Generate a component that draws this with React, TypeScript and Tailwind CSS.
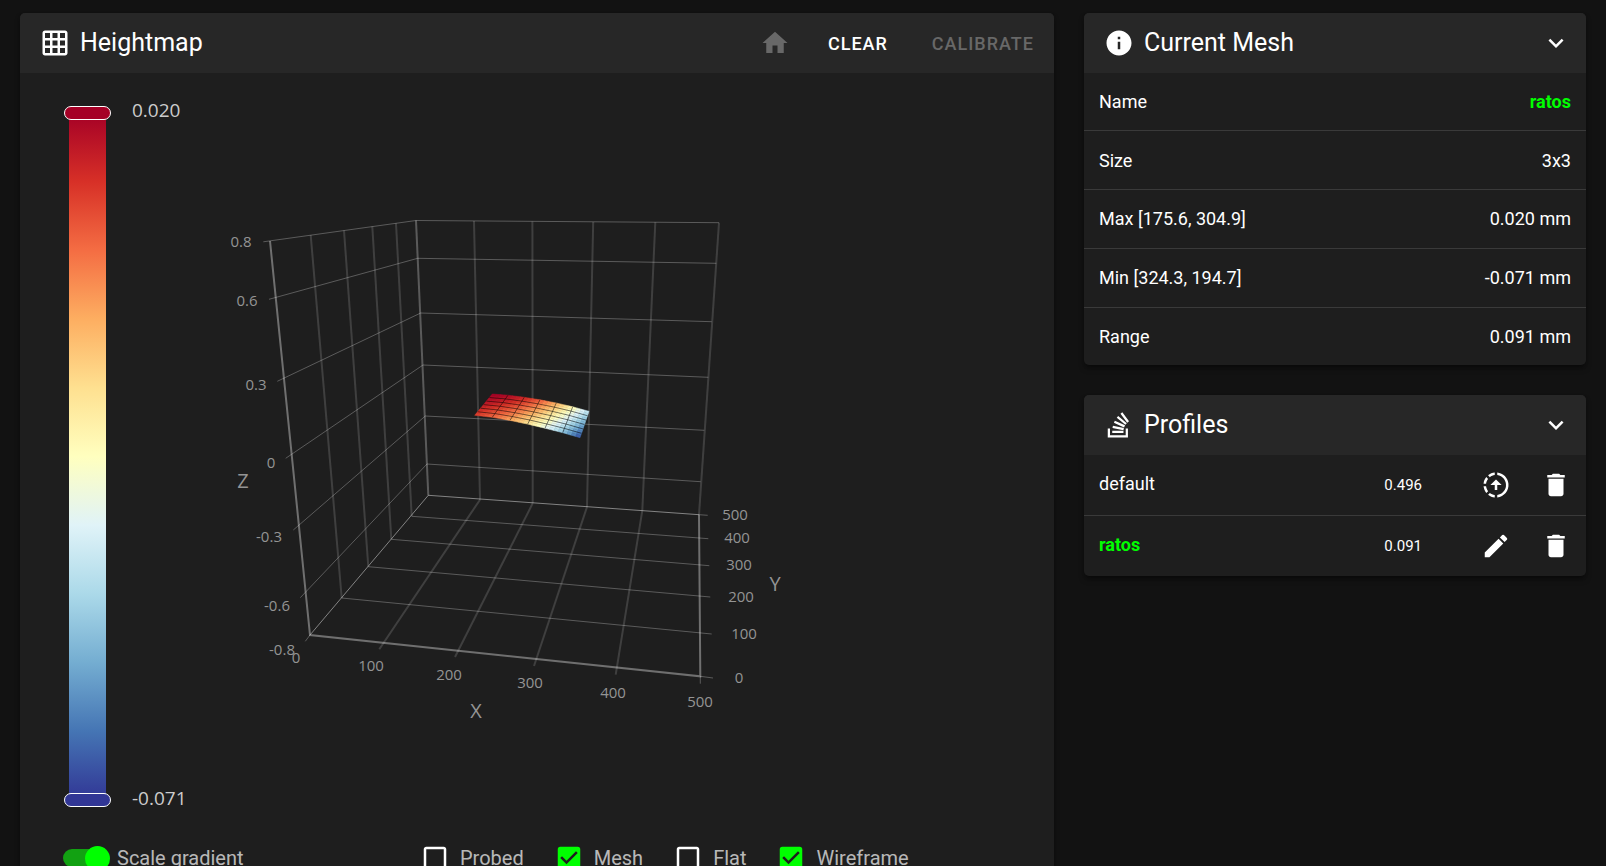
import { useState } from 'react'
import type { ReactNode } from 'react'
import {
  MdCheckBox,
  MdCheckBoxOutlineBlank,
  MdDelete,
  MdEdit,
  MdGridOn,
  MdHome,
  MdInfo,
  MdKeyboardArrowDown,
} from 'react-icons/md'

type Point = [number, number]
type Line = [number, number, number, number]

const MESH_ROWS = [
  { label: 'Name', value: 'ratos', active: true },
  { label: 'Size', value: '3x3' },
  { label: 'Max [175.6, 304.9]', value: '0.020 mm' },
  { label: 'Min [324.3, 194.7]', value: '-0.071 mm' },
  { label: 'Range', value: '0.091 mm' },
]

const PROFILES = [
  { name: 'default', range: '0.496', active: false },
  { name: 'ratos', range: '0.091', active: true },
]

const SCALE = [
  '#313695', '#4575b4', '#74add1', '#abd9e9', '#e0f3f8', '#ffffbf',
  '#fee090', '#fdae61', '#f46d43', '#d73027', '#a50026',
]

// left wall, then back wall
const WALL_VERTICALS: Line[] = [
  [310.7, 235, 341.7, 598],
  [344, 230.5, 368.3, 566.7],
  [372.3, 226.5, 391.3, 539.3],
  [396, 223.3, 411.7, 516.3],
  [474, 221, 480, 499.7],
  [532.4, 221.5, 532.7, 503.3],
  [593.2, 222, 587, 507],
  [655.3, 222.3, 642.3, 510.7],
  [719, 222.7, 699, 514.7],
]

// tick end on the z axis, back corner, right end
const Z_RINGS: [Point, Point, Point][] = [
  [[263.3, 241.8], [416, 220.5], [719, 222.7]],
  [[269, 299.3], [417.7, 258.3], [716.3, 263.3]],
  [[277.3, 381.3], [420.7, 313], [711.7, 321.7]],
  [[285.7, 458.3], [423, 365], [708.3, 377.3]],
  [[293.3, 530], [425.3, 416], [704.3, 430.3]],
  [[300.3, 597.7], [427, 464], [700.7, 481.7]],
]

const FLOOR_X: Line[] = [
  [480, 499.7, 379.3, 649.3],
  [532.7, 503.3, 455, 657],
  [587, 507, 534, 666],
  [642.3, 510.7, 615.7, 674.7],
]

const FLOOR_Y: Line[] = [
  [341.7, 598, 711.7, 634],
  [368.3, 566.7, 710.3, 597],
  [391.3, 539.3, 709.3, 565.7],
  [411.7, 516.3, 708.3, 538.7],
]

const TICKS: Line[] = [
  [310, 635, 305.3, 641.3],
  [700.3, 676.3, 700.3, 683.7],
  [699, 514.7, 707.7, 515.3],
  [700.3, 676.3, 713, 678],
]

const TICK_LABELS: [string, number, number][] = [
  ['0.8', 241, 242],
  ['0.6', 247, 301],
  ['0.3', 256, 385],
  ['0', 271, 463],
  ['-0.3', 269, 537],
  ['-0.6', 277, 606],
  ['-0.8', 282, 650],
  ['0', 296, 658],
  ['100', 371, 666],
  ['200', 449, 675],
  ['300', 530, 683],
  ['400', 613, 693],
  ['500', 700, 702],
  ['500', 735, 515],
  ['400', 737, 538],
  ['300', 739, 565],
  ['200', 741, 597],
  ['100', 744, 634],
  ['0', 739, 678],
]

const AXIS_NAMES: [string, number, number][] = [
  ['Z', 243, 481],
  ['X', 476, 711],
  ['Y', 775, 584],
]

// back and front edge of the probed surface
const BACK_EDGE: Point[] = [
  [492.3, 394], [508, 395.2], [524.3, 397.3], [540, 399.8], [556.3, 403], [572.7, 406.8], [589, 411.3],
]
const FRONT_EDGE: Point[] = [
  [474.7, 415.3], [492.3, 417.3], [510, 420.4], [527.7, 424.1], [545, 428.2], [562.7, 432.7], [580, 437.7],
]

function alongEdge(edge: Point[], u: number): Point {
  const at = u * (edge.length - 1)
  const i = Math.min(Math.floor(at), edge.length - 2)
  const f = at - i
  return [
    edge[i][0] + (edge[i + 1][0] - edge[i][0]) * f,
    edge[i][1] + (edge[i + 1][1] - edge[i][1]) * f,
  ]
}

function surface(u: number, v: number): Point {
  const a = alongEdge(BACK_EDGE, u)
  const b = alongEdge(FRONT_EDGE, u)
  return [a[0] + (b[0] - a[0]) * v, a[1] + (b[1] - a[1]) * v]
}

function level(u: number, v: number) {
  const back = 1 - 0.67 * u * u
  const front = 0.88 - 0.35 * u - 0.5 * u * u
  return back + (front - back) * v
}

function scaleColor(t: number) {
  const at = Math.max(0, Math.min(1, t)) * (SCALE.length - 1)
  const i = Math.min(Math.floor(at), SCALE.length - 2)
  const channel = (hex: string, c: number) => parseInt(hex.slice(1 + c * 2, 3 + c * 2), 16)
  const rgb = [0, 1, 2].map(c => {
    const from = channel(SCALE[i], c)
    return Math.round(from + (channel(SCALE[i + 1], c) - from) * (at - i))
  })
  return `rgb(${rgb.join(',')})`
}

const toPoints = (points: Point[]) => points.map(p => p.join(',')).join(' ')

function MeshSurface() {
  const cols = 24
  const rows = 12
  const cells = []
  for (let r = 0; r < rows; r++) {
    for (let c = 0; c < cols; c++) {
      const u0 = c / cols
      const u1 = (c + 1) / cols
      const v0 = r / rows
      const v1 = (r + 1) / rows
      const color = scaleColor(level((u0 + u1) / 2, (v0 + v1) / 2))
      cells.push(
        <polygon
          key={`${r}-${c}`}
          points={toPoints([surface(u0, v0), surface(u1, v0), surface(u1, v1), surface(u0, v1)])}
          fill={color}
          stroke={color}
          strokeWidth={0.5}
        />
      )
    }
  }
  const steps = [0, 1, 2, 3, 4, 5, 6]
  return (
    <g>
      {cells}
      <g fill="none" stroke="#000" strokeOpacity={0.5} strokeWidth={1}>
        {steps.slice(1, 6).map(n => (
          <polyline key={`u${n}`} points={toPoints([surface(n / 6, 0), surface(n / 6, 1)])} />
        ))}
        {steps.slice(1, 6).map(n => (
          <polyline key={`v${n}`} points={toPoints(steps.map(s => surface(s / 6, n / 6)))} />
        ))}
      </g>
    </g>
  )
}

function Lines({ lines }: { lines: Line[] }) {
  return (
    <>
      {lines.map(([x1, y1, x2, y2], i) => (
        <line key={i} x1={x1} y1={y1} x2={x2} y2={y2} />
      ))}
    </>
  )
}

function HeightmapChart() {
  return (
    <svg
      viewBox="187 106 847 701"
      className="block h-auto w-full font-['Open_Sans','Noto_Sans',sans-serif]"
      role="img"
      aria-label="Heightmap">
      <g stroke="#fff" strokeOpacity={0.15} strokeWidth={2} fill="none">
        <Lines lines={WALL_VERTICALS} />
        <Lines lines={FLOOR_X} />
      </g>
      <g stroke="#fff" strokeOpacity={0.27} strokeWidth={1} fill="none">
        {Z_RINGS.map((ring, i) => (
          <polyline key={i} points={toPoints(ring)} />
        ))}
        <Lines lines={FLOOR_Y} />
        <Lines lines={TICKS} />
      </g>
      <g stroke="#fff" fill="none">
        <polyline points="416,220.5 428.3,495.3" strokeOpacity={0.27} strokeWidth={2} />
        <polyline points="310,635 428.3,495.3 699,514.7" strokeOpacity={0.45} strokeWidth={1} />
        <polyline points="270,241 310,635 700.3,676.3 699,514.7" strokeOpacity={0.36} strokeWidth={2} />
      </g>

      <MeshSurface />

      <g fill="#949494" textAnchor="middle">
        {TICK_LABELS.map(([text, x, y], i) => (
          <text key={i} x={x} y={y + 5} className="text-[15px]">{text}</text>
        ))}
        {AXIS_NAMES.map(([text, x, y]) => (
          <text key={text} x={x} y={y + 7} className="text-[20px]">{text}</text>
        ))}
      </g>
    </svg>
  )
}

function ScaleHandle({ label, value, onChange, thumb }: {
  label: string
  value: number
  onChange: (value: number) => void
  thumb: string
}) {
  return (
    <input
      type="range"
      aria-label={label}
      min={-71}
      max={20}
      value={value}
      onChange={e => onChange(Number(e.target.value))}
      className={`pointer-events-none absolute inset-0 m-0 h-full w-full appearance-none bg-transparent [direction:rtl] [writing-mode:vertical-lr] [&::-webkit-slider-thumb]:pointer-events-auto [&::-webkit-slider-thumb]:h-[14px] [&::-webkit-slider-thumb]:w-[47px] [&::-webkit-slider-thumb]:appearance-none [&::-webkit-slider-thumb]:rounded-full [&::-webkit-slider-thumb]:border [&::-webkit-slider-thumb]:border-white ${thumb}`}
    />
  )
}

function ColorScale() {
  const [max, setMax] = useState(20)
  const [min, setMin] = useState(-71)
  return (
    <div className="flex gap-[21px] font-['Open_Sans','Noto_Sans',sans-serif] text-[19px] leading-[9px] text-[#cccccc]">
      <div className="relative h-[701px] w-[47px]">
        <div className="mx-auto h-full w-[37px] py-[7px]">
          <div className="h-full bg-[linear-gradient(to_top,#313695,#4575b4,#74add1,#abd9e9,#e0f3f8,#ffffbf,#fee090,#fdae61,#f46d43,#d73027,#a50026)]" />
        </div>
        <ScaleHandle label="Scale maximum" value={max} onChange={setMax} thumb="[&::-webkit-slider-thumb]:bg-[#a50026]" />
        <ScaleHandle label="Scale minimum" value={min} onChange={setMin} thumb="[&::-webkit-slider-thumb]:bg-[#313695]" />
      </div>
      <div className="flex w-[55px] flex-col justify-between pb-1">
        <span>{(max / 1000).toFixed(3)}</span>
        <span>{(min / 1000).toFixed(3)}</span>
      </div>
    </div>
  )
}

function Toggle({ label, initial }: { label: string; initial: boolean }) {
  const [checked, setChecked] = useState(initial)
  const Icon = checked ? MdCheckBox : MdCheckBoxOutlineBlank
  return (
    <label className="flex cursor-pointer items-center gap-[10px]">
      <span className="relative">
        <input
          type="checkbox"
          checked={checked}
          onChange={e => setChecked(e.target.checked)}
          className="absolute inset-0 h-full w-full cursor-pointer opacity-0"
        />
        <Icon size={30} className={checked ? 'text-[#00ff00]' : 'text-white'} />
      </span>
      {label}
    </label>
  )
}

function Card({ icon, title, actions, children }: {
  icon: ReactNode
  title: string
  actions: ReactNode
  children: ReactNode
}) {
  return (
    <section className="overflow-hidden rounded-[5px] bg-[#1e1e1e] shadow-md shadow-black/40">
      <header className="flex h-[60px] items-center gap-[10px] bg-[#272727] pl-5">
        {icon}
        <h2 className="flex-1 text-[25px] leading-8">{title}</h2>
        {actions}
      </header>
      {children}
    </section>
  )
}

function CollapseButton({ label }: { label: string }) {
  return (
    <button aria-label={label} className="mr-[15px]">
      <MdKeyboardArrowDown size={30} />
    </button>
  )
}

function StackIcon() {
  return (
    <svg width="30" height="30" viewBox="0 0 24 24" fill="currentColor" aria-hidden="true">
      <path d="M17.36,20.2V14.82H19.15V22H3V14.82H4.8V20.2H17.36M6.77,14.32L7.14,12.56L15.93,14.41L15.56,16.17L6.77,14.32M7.93,10.11L8.69,8.5L16.83,12.28L16.07,13.9L7.93,10.11M10.19,6.12L11.34,4.74L18.24,10.5L17.09,11.87L10.19,6.12M14.64,1.87L20,9.08L18.56,10.15L13.2,2.94L14.64,1.87M6.59,18.41V16.61H15.57V18.41H6.59Z" />
    </svg>
  )
}

function ProgressUploadIcon() {
  return (
    <svg width="30" height="30" viewBox="0 0 24 24" fill="currentColor" aria-hidden="true">
      <path d="M13 2.03V4.05C17.39 4.59 20.5 8.58 19.96 12.97C19.5 16.61 16.64 19.5 13 19.93V21.93C18.5 21.38 22.5 16.5 21.95 11C21.5 6.25 17.73 2.5 13 2.03M11 2.06C9.05 2.25 7.19 3 5.67 4.26L7.1 5.74C8.22 4.84 9.57 4.26 11 4.06V2.06M4.26 5.67C3 7.19 2.25 9.04 2.05 11H4.05C4.24 9.58 4.8 8.23 5.69 7.1L4.26 5.67M2.06 13C2.26 14.96 3.03 16.81 4.27 18.33L5.69 16.9C4.81 15.77 4.24 14.42 4.06 13H2.06M7.1 18.37L5.67 19.74C7.18 21 9.04 21.79 11 22V20C9.58 19.82 8.23 19.25 7.1 18.37M12 7.5L7.5 12H11V16H13V12H16.5L12 7.5Z" />
    </svg>
  )
}

export default function App() {
  const [scaled, setScaled] = useState(true)

  return (
    <main className="grid h-screen grid-cols-3 items-start gap-[30px] overflow-hidden bg-[#121212] px-5 pt-[13px] font-[Roboto,sans-serif] text-white">
      <div className="col-span-2">
        <Card
          icon={<MdGridOn size={30} />}
          title="Heightmap"
          actions={
            <div className="flex items-center pr-5 text-[18px] font-medium tracking-[1px]">
              <button disabled aria-label="Home" className="mr-[38px] text-[#686868]">
                <MdHome size={30} />
              </button>
              <button className="mr-[44px]">CLEAR</button>
              <button disabled className="text-[#686868]">CALIBRATE</button>
            </div>
          }>
          <div className="flex items-start pt-[33px] pr-5 pl-11">
            <ColorScale />
            <div className="min-w-0 flex-1">
              <HeightmapChart />
            </div>
          </div>

          <div className="flex items-center px-[43px] pt-9 pb-10 text-xl text-white/70">
            <label className="flex w-[357px] cursor-pointer items-center gap-[7px]">
              <span className="relative flex h-[25px] w-[47px] items-center">
                <input
                  type="checkbox"
                  role="switch"
                  checked={scaled}
                  onChange={e => setScaled(e.target.checked)}
                  className="peer absolute inset-0 h-full w-full cursor-pointer opacity-0"
                />
                <span className="h-[18px] w-[45px] rounded-full bg-white/30 peer-checked:bg-[#12a112]" />
                <span className="absolute left-0 size-[25px] rounded-full bg-[#bdbdbd] peer-checked:right-0 peer-checked:left-auto peer-checked:bg-[#00ff00]" />
              </span>
              Scale gradient
            </label>
            <div className="flex gap-[30px]">
              <Toggle label="Probed" initial={false} />
              <Toggle label="Mesh" initial={true} />
              <Toggle label="Flat" initial={false} />
              <Toggle label="Wireframe" initial={true} />
            </div>
          </div>
        </Card>
      </div>

      <div className="flex flex-col gap-[30px]">
        <Card icon={<MdInfo size={30} />} title="Current Mesh" actions={<CollapseButton label="Collapse current mesh" />}>
          <table className="h-[292px] w-full text-[18px]">
            <tbody className="divide-y divide-[#3a3a3a]">
              {MESH_ROWS.map(row => (
                <tr key={row.label}>
                  <th scope="row" className="pl-[15px] text-left font-normal">{row.label}</th>
                  <td className={row.active ? 'pr-[15px] text-right font-bold text-[#00ff00]' : 'pr-[15px] text-right'}>
                    {row.value}
                  </td>
                </tr>
              ))}
            </tbody>
          </table>
        </Card>

        <Card icon={<StackIcon />} title="Profiles" actions={<CollapseButton label="Collapse profiles" />}>
          <table className="h-[121px] w-full text-[18px]">
            <tbody className="divide-y divide-[#3a3a3a]">
              {PROFILES.map(p => (
                <tr key={p.name}>
                  <th
                    scope="row"
                    className={p.active ? 'pb-[3px] pl-[15px] text-left font-bold text-[#00ff00]' : 'pb-[3px] pl-[15px] text-left font-normal'}>
                    {p.name}
                  </th>
                  <td className="text-right text-[15px]">{p.range}</td>
                  <td className="w-[164px] pr-[15px]">
                    <div className="flex justify-end gap-[30px]">
                      <button aria-label={p.active ? `Rename ${p.name}` : `Load ${p.name}`}>
                        {p.active ? <MdEdit size={30} /> : <ProgressUploadIcon />}
                      </button>
                      <button aria-label={`Delete ${p.name}`}>
                        <MdDelete size={30} />
                      </button>
                    </div>
                  </td>
                </tr>
              ))}
            </tbody>
          </table>
        </Card>
      </div>
    </main>
  )
}
